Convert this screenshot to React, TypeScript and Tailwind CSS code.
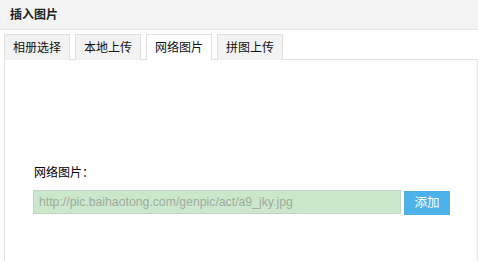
import { useState } from "react";

const tabs = ["相册选择", "本地上传", "网络图片", "拼图上传"];

export default function App() {
    const [active, setActive] = useState(2);
    const [url, setUrl] = useState("");

    return (
        <div
            className="w-[478px] h-[261px] overflow-hidden bg-white text-[12px] text-[#333]"
            style={{ fontFamily: '"Liberation Sans", "Noto Sans CJK SC", sans-serif' }}
        >
            <div className="h-[30px] bg-[#f3f3f3] border-b border-[#e3e3e3] flex items-center pl-[10px]">
                <span className="font-bold text-[#222]">插入图片</span>
            </div>

            <div className="pt-[4px] pl-[4px]">
                <div className="flex gap-[5px]">
                    {tabs.map((t, i) => (
                        <button
                            key={t}
                            onClick={() => setActive(i)}
                            className={`w-[66px] h-[26px] border border-b-0 border-[#e0e0e0] text-[12px] text-[#111] -mb-px relative ${i === active ? "bg-white" : "bg-[#f3f3f3]"}`}
                        >
                            {t}
                        </button>
                    ))}
                </div>

                <div className="h-[220px] border border-[#e0e0e0] pt-[103px] pl-[28px]">
                    <div className="leading-[20px] ml-px text-[#000]">网络图片：</div>
                    <div className="flex mt-[7px]">
                        <input
                            value={url}
                            onChange={(e) => setUrl(e.target.value)}
                            placeholder="http://pic.baihaotong.com/genpic/act/a9_jky.jpg"
                            className="w-[368px] h-[24px] bg-[#cce8cc] border border-[#c4d4c4] px-[5px] text-[12.25px] text-[#666] placeholder:text-[#9fab9f] outline-none"
                        />
                        <button className="ml-[3px] mt-px w-[46px] h-[24px] bg-[#4db1ea] text-white text-[12.5px]">
                            添加
                        </button>
                    </div>
                </div>
            </div>
        </div>
    );
}
